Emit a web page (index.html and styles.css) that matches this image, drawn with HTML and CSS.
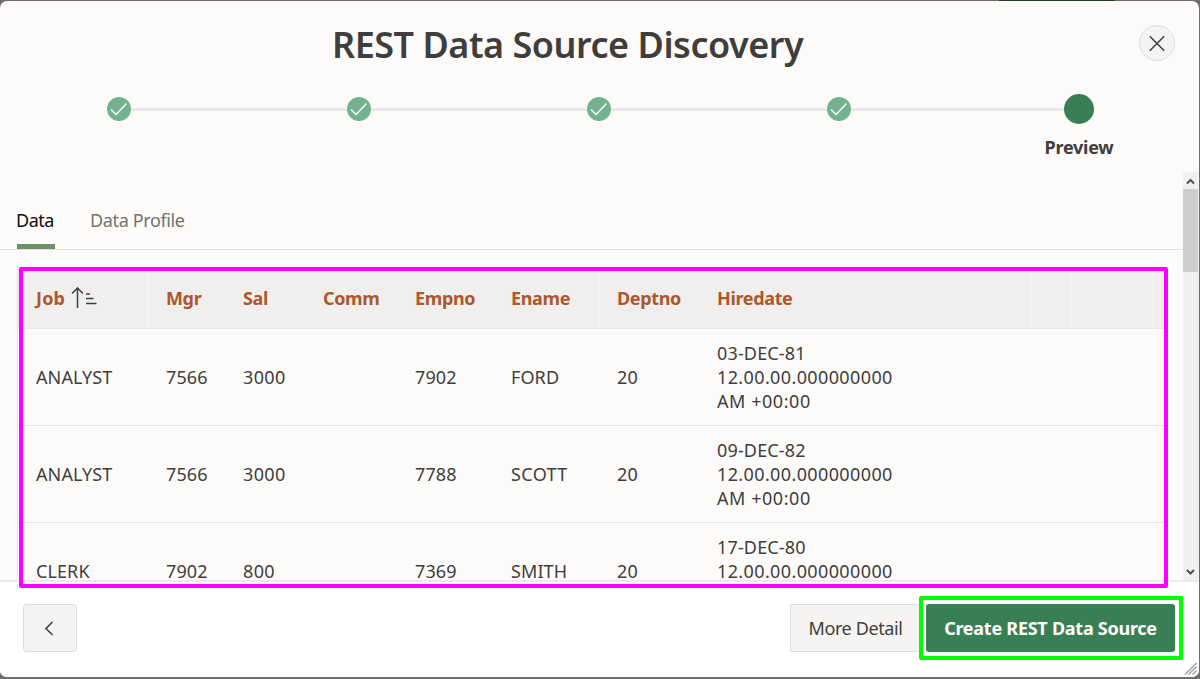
FILE: index.html
```html
<!DOCTYPE html>
<html lang="en">
<head>
<meta charset="utf-8">
<title>REST Data Source Discovery</title>
<link rel="stylesheet" href="styles.css">
</head>
<body>
<div class="strip"></div>
<main class="dialog">
  <header class="head">
    <h1 class="title">REST Data Source Discovery</h1>
    <button class="close" aria-label="Close"><svg width="18" height="18" viewBox="0 0 18 18"><path d="M1.800 2.300l14.400 14.400M16.200 2.300L1.800 16.700"/></svg></button>
  </header>
  <ol class="steps">
    <li class="step"><span class="dot"><svg width="24" height="24" viewBox="0 0 24 24"><path d="M4 12.500l5 5L19.500 6.500"/></svg></span></li>
    <li class="step"><span class="dot"><svg width="24" height="24" viewBox="0 0 24 24"><path d="M4 12.500l5 5L19.500 6.500"/></svg></span></li>
    <li class="step"><span class="dot"><svg width="24" height="24" viewBox="0 0 24 24"><path d="M4 12.500l5 5L19.500 6.500"/></svg></span></li>
    <li class="step"><span class="dot"><svg width="24" height="24" viewBox="0 0 24 24"><path d="M4 12.500l5 5L19.500 6.500"/></svg></span></li>
    <li class="step"><span class="dot current"></span><span class="step-label">Preview</span></li>
  </ol>
  <div class="body">
    <div class="content">
      <nav class="tabs"><a class="tab active">Data</a><a class="tab">Data Profile</a></nav>
      <table class="report">
        <colgroup><col class="c1"><col class="c2"><col class="c3"><col class="c4"><col class="c5"><col class="c6"><col class="c7"><col class="c8"><col class="c9"><col class="c10"><col class="c11"><col class="c12"></colgroup>
        <thead><tr>
          <th><span class="job">Job</span><svg class="sort" width="26" height="22" viewBox="0 0 26 22"><path d="M6.500 21V1M1 6.500L6.500 1L12 6.500M15 7h4M15 11.500h7.500M15 16.500h10.500"/></svg></th>
          <th>Mgr</th><th>Sal</th><th>Comm</th><th class="plain">Empno</th><th>Ename</th><th>Deptno</th><th class="plain">Hiredate</th><th></th><th></th><th></th><th></th>
        </tr></thead>
        <tbody>
          <tr><td>ANALYST</td><td>7566</td><td class="wide">3000</td><td></td><td>7902</td><td>FORD</td><td>20</td><td class="date">03-DEC-81<br><span class="wide">12.00.00.000000000</span><br><span class="zone">AM +00:00</span></td><td></td><td></td><td></td><td></td></tr>
          <tr><td>ANALYST</td><td>7566</td><td class="wide">3000</td><td></td><td>7788</td><td class="wide">SCOTT</td><td>20</td><td class="date">09-DEC-82<br><span class="wide">12.00.00.000000000</span><br><span class="zone">AM +00:00</span></td><td></td><td></td><td></td><td></td></tr>
          <tr><td>CLERK</td><td>7902</td><td class="wide">800</td><td></td><td>7369</td><td>SMITH</td><td>20</td><td class="date">17-DEC-80<br><span class="wide">12.00.00.000000000</span><br><span class="zone">AM +00:00</span></td><td></td><td></td><td></td><td></td></tr>
        </tbody>
      </table>
    </div>
    <div class="scrollbar">
      <svg class="arrow" width="15" height="17" viewBox="0 0 15 17"><path d="M4 11.500l3.500-3.500L11 11.500"/></svg>
      <div class="thumb"></div>
      <svg class="arrow down" width="15" height="17" viewBox="0 0 15 17"><path d="M4 7L7.500 10.500L11 7"/></svg>
    </div>
  </div>
  <footer class="foot">
    <button class="btn back" aria-label="Previous"><svg width="12" height="16" viewBox="0 0 12 16"><path d="M8.500 2L2 8.500l6.500 6.500"/></svg></button>
    <button class="btn more">More Detail</button>
    <button class="btn create">Create REST Data Source</button>
  </footer>
  <svg class="grip" width="13" height="13" viewBox="0 0 13 13"><path d="M1 12.500L12.500 1M4.500 12.500l8-8M8.500 12.500l4-4"/></svg>
</main>
<div class="mark table-mark"></div>
<div class="mark button-mark"></div>
</body>
</html>
```
FILE: styles.css
```css
* { box-sizing: border-box; }
body {
  margin: 0;
  height: 679px;
  overflow: hidden;
  padding: 1px 1px 2px 0;
  background: #6f6c6b;
  color: #403e3c;
  font: 18px/24px "Noto Sans", sans-serif;
}
svg { fill: none; stroke: currentColor; display: block; }
button { font: inherit; color: inherit; padding: 0; }
.strip {
  position: absolute;
  top: 0;
  left: 999px;
  width: 116px;
  height: 1px;
  background: #1c422c;
}
.dialog {
  position: relative;
  height: 676px;
  display: flex;
  flex-direction: column;
  border-radius: 7px;
  background: #fcfbfa;
  overflow: hidden;
}
.head {
  height: 88px;
  display: flex;
  align-items: center;
  padding: 0 24px 0 332px;
  justify-content: space-between;
}
.title { margin: 0; font-size: 36px; font-weight: 600; letter-spacing: -0.48px; white-space: nowrap; line-height: 48px; }
.close {
  width: 36px;
  height: 36px;
  margin-top: -4px;
  display: grid;
  place-items: center;
  border: 1px solid #dfdddb;
  border-radius: 50%;
  background: #f5f4f2;
}
.close svg { stroke-width: 1.5; }
.steps {
  height: 83px;
  margin: 0 0 0 -1px;
  padding: 0;
  list-style: none;
  display: grid;
  grid-template-columns: repeat(5, 240px);
}
.step {
  display: flex;
  flex-direction: column;
  align-items: center;
  padding-top: 5px;
  background: linear-gradient(#ebeae8, #ebeae8) 0 19px / 100% 3px no-repeat;
}
.step:first-child { background-position: 120px 19px; }
.step:last-child { background-size: 120px 3px; }
.dot {
  width: 24px;
  height: 24px;
  margin: 3px 0;
  border-radius: 50%;
  background: #74b18e;
  color: #fff;
}
.dot svg { stroke-width: 1.4; }
.dot.current { width: 30px; height: 30px; margin: 0; background: #397f55; }
.step-label { margin-top: 11px; font-weight: 700; letter-spacing: -0.25px; }
.body { height: 408px; display: flex; }
.content { flex: 1; overflow: hidden; }
.tabs {
  height: 78px;
  display: flex;
  gap: 36px;
  padding-left: 17px;
  border-bottom: 1px solid #e3e1df;
  letter-spacing: -0.37px;
}
.tab { padding-top: 36px; height: 77px; color: #74716e; text-indent: -1px; }
.tab.active { color: #100f0e; width: 38px; border-bottom: 5px solid #6b9065; white-space: nowrap; letter-spacing: -0.5px; }
.report {
  table-layout: fixed;
  width: 1148px;
  margin: 17px 0 0 17px;
  border-collapse: separate;
  border-spacing: 0;
  border-left: 1px solid #e8e6e4;
}
.c1 { width: 130px; } .c2 { width: 77px; } .c3 { width: 80px; } .c4 { width: 92px; }
.c5 { width: 96px; } .c6 { width: 106px; } .c7 { width: 100px; } .c8 { width: 251px; }
.c9 { width: 81px; } .c10 { width: 40px; } .c11 { width: 81px; } .c12 { width: 13px; }
th, td { text-align: left; white-space: nowrap; padding: 0 0 0 18px; border-bottom: 1px solid #e8e6e4; }
th:nth-child(n+9), td:nth-child(n+9) { padding: 0; }
th {
  height: 62px;
  background: #f0efed;
  color: #ad572c;
  font-weight: 700;
  letter-spacing: -0.35px;
  box-shadow: inset 1px 0 #f4f3f1;
}
th:first-child, th.plain { box-shadow: none; }
td { height: 97px; letter-spacing: 0.1px; }
.job { letter-spacing: 0.2px; }
.wide { letter-spacing: 0.38px; }
.date { letter-spacing: 0.15px; }
.zone { letter-spacing: 0.55px; }
.sort { display: inline-block; margin: 0 0 0 6px; vertical-align: -4px; color: #403e3c; stroke-width: 1.5; }
.scrollbar { width: 16px; padding-right: 1px; background: #f0f0f0; display: flex; flex-direction: column; color: #505050; }
.thumb { height: 83px; background: #cdcdcd; }
.arrow { stroke-width: 2; }
.down { margin-top: auto; }
.foot {
  flex: 1;
  display: flex;
  align-items: flex-start;
  padding: 22px 24px 0 23px;
  border-top: 2px solid #ebeae8;
  background: #fff;
}
.btn {
  height: 48px;
  display: grid;
  place-items: center;
  border: 1px solid #dfdddb;
  border-radius: 3px;
  background: #f5f4f2;
  white-space: nowrap;
}
.back { width: 54px; margin-right: auto; }
.back svg { stroke-width: 1.6; }
.more { width: 130px; margin-right: 6px; border-right: 0; letter-spacing: -0.38px; }
.create { width: 249px; border: 0; background: #397f55; color: #fff; font-weight: 700; letter-spacing: -0.26px; }
.grip { position: absolute; right: 2px; bottom: 2px; color: #aaa; stroke-width: 1.6; }
.mark { position: absolute; border-radius: 2px; }
.table-mark { left: 19px; top: 267px; width: 1149px; height: 321px; border: 4px solid #f0f; }
.button-mark { left: 919px; top: 596px; width: 264px; height: 64px; border: 4px solid #0f0; }
```
